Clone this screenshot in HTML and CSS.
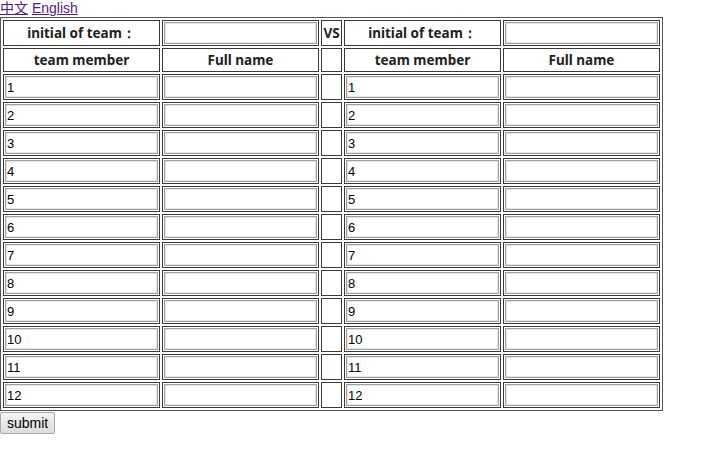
FILE: index.html
```html
<!DOCTYPE html>
<html lang="en">

<head>
    <meta charset="UTF-8">
    <meta name="viewport" content="width=device-width, initial-scale=1.0">
    <title>Team Roster</title>
    <link rel="stylesheet" href="styles.css">
</head>

<body>
    <div class="lang">
        <a href="#" class="lang-link">中文</a> <a href="#" class="lang-link">English</a>
    </div>
    <form class="roster">
        <table class="roster-table">
            <tr>
                <th>initial of team：</th>
                <td><input type="text" class="field"></td>
                <th class="vs">VS</th>
                <th>initial of team：</th>
                <td><input type="text" class="field"></td>
            </tr>
            <tr>
                <th>team member</th>
                <th>Full name</th>
                <td class="vs"></td>
                <th>team member</th>
                <th>Full name</th>
            </tr>
            <!-- member rows 1 to 12 -->
            <tr><td><input type="text" class="field" value="1"></td><td><input type="text" class="field"></td><td class="vs"></td><td><input type="text" class="field" value="1"></td><td><input type="text" class="field"></td></tr>
            <tr><td><input type="text" class="field" value="2"></td><td><input type="text" class="field"></td><td class="vs"></td><td><input type="text" class="field" value="2"></td><td><input type="text" class="field"></td></tr>
            <tr><td><input type="text" class="field" value="3"></td><td><input type="text" class="field"></td><td class="vs"></td><td><input type="text" class="field" value="3"></td><td><input type="text" class="field"></td></tr>
            <tr><td><input type="text" class="field" value="4"></td><td><input type="text" class="field"></td><td class="vs"></td><td><input type="text" class="field" value="4"></td><td><input type="text" class="field"></td></tr>
            <tr><td><input type="text" class="field" value="5"></td><td><input type="text" class="field"></td><td class="vs"></td><td><input type="text" class="field" value="5"></td><td><input type="text" class="field"></td></tr>
            <tr><td><input type="text" class="field" value="6"></td><td><input type="text" class="field"></td><td class="vs"></td><td><input type="text" class="field" value="6"></td><td><input type="text" class="field"></td></tr>
            <tr><td><input type="text" class="field" value="7"></td><td><input type="text" class="field"></td><td class="vs"></td><td><input type="text" class="field" value="7"></td><td><input type="text" class="field"></td></tr>
            <tr><td><input type="text" class="field" value="8"></td><td><input type="text" class="field"></td><td class="vs"></td><td><input type="text" class="field" value="8"></td><td><input type="text" class="field"></td></tr>
            <tr><td><input type="text" class="field" value="9"></td><td><input type="text" class="field"></td><td class="vs"></td><td><input type="text" class="field" value="9"></td><td><input type="text" class="field"></td></tr>
            <tr><td><input type="text" class="field" value="10"></td><td><input type="text" class="field"></td><td class="vs"></td><td><input type="text" class="field" value="10"></td><td><input type="text" class="field"></td></tr>
            <tr><td><input type="text" class="field" value="11"></td><td><input type="text" class="field"></td><td class="vs"></td><td><input type="text" class="field" value="11"></td><td><input type="text" class="field"></td></tr>
            <tr><td><input type="text" class="field" value="12"></td><td><input type="text" class="field"></td><td class="vs"></td><td><input type="text" class="field" value="12"></td><td><input type="text" class="field"></td></tr>
        </table>
        <button type="submit" class="submit">submit</button>
    </form>
</body>

</html>
```

FILE: styles.css
```css
/* No page margin, the links start in the corner */
body {
    margin: 0;
    font-family: "Liberation Sans", "Noto Sans CJK SC", sans-serif;
    font-size: 13px;
    color: #000;
    background-color: #fff;
}

/* Language switch */
.lang {
    height: 17px;
    line-height: 17px;
    font-size: 14px;
}

.lang-link {
    color: #551a8b;
    text-decoration: underline;
}

/* Old style bordered table */
.roster-table {
    border: 1px solid #555;
    border-spacing: 2px;
    border-collapse: separate;
}

.roster-table th,
.roster-table td {
    border: 1px solid #3a3a3a;
    padding: 1px;
    width: 153px;
    height: 20px;
}

.roster-table th {
    font-family: "Noto Sans", "DejaVu Sans", sans-serif;
    font-weight: bold;
    font-size: 13.5px;
    line-height: 20px;
    color: #222;
    text-align: center;
}

.roster-table .vs {
    width: 17px;
    padding: 1px;
}

/* Text inputs fill their cell */
.field {
    display: block;
    box-sizing: border-box;
    width: 153px;
    height: 22px;
    margin: 0;
    padding: 0 1px;
    border: 1px solid #a0a0a0;
    box-shadow: inset 0 0 0 1px #e4e4e4;
    font-family: "Liberation Sans", sans-serif;
    font-size: 13px;
    color: #000;
    background-color: #fff;
}

.submit {
    display: block;
    height: 22px;
    margin: 1px 0 0 0;
    padding: 0 6px;
    font-family: "Liberation Sans", sans-serif;
    font-size: 14px;
    color: #000;
    border: 1px solid #a8a8a8;
    border-radius: 2px;
    background: linear-gradient(#f4f4f4, #dcdcdc);
}
```
